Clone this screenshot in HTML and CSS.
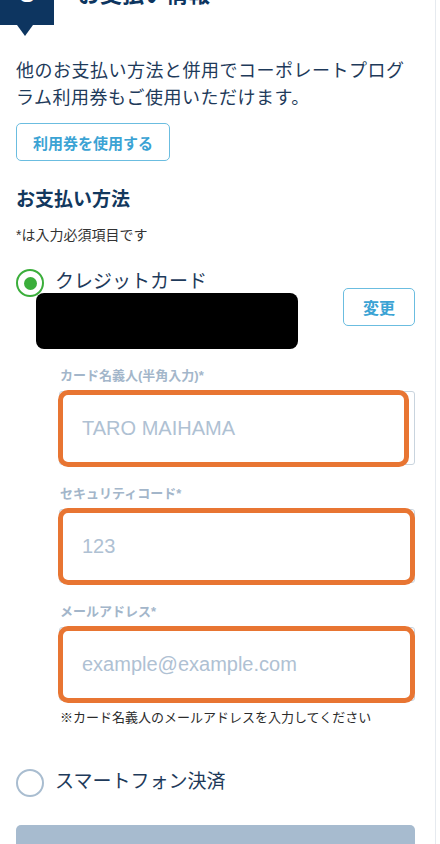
FILE: index.html
```html
<!DOCTYPE html>
<html lang="ja">
<head>
    <meta charset="UTF-8">
    <meta name="viewport" content="width=device-width, initial-scale=1.0">
    <title>お支払い情報</title>
    <link rel="stylesheet" href="styles.css">
</head>
<body>
    <div class="card">
        <div class="step-head">
            <div class="step-num">3</div>
            <h2 class="step-title">お支払い情報</h2>
        </div>

        <p class="lead">他のお支払い方法と併用でコーポレートプログラム利用券もご使用いただけます。</p>
        <button class="outline-button coupon-button">利用券を使用する</button>

        <h3 class="section-title">お支払い方法</h3>
        <p class="required-note">*は入力必須項目です</p>

        <div class="radio-row">
            <span class="radio checked"></span>
            <span class="radio-label">クレジットカード</span>
        </div>
        <div class="card-info">
            <div class="masked"></div>
            <button class="outline-button change-button">変更</button>
        </div>

        <div class="fields">
            <div class="field">
                <label class="field-label">カード名義人(半角入力)*</label>
                <div class="input-wrap hl-short">
                    <input class="text-input" type="text" placeholder="TARO MAIHAMA">
                </div>
            </div>
            <div class="field">
                <label class="field-label">セキュリティコード*</label>
                <div class="input-wrap">
                    <input class="text-input" type="text" placeholder="123">
                </div>
            </div>
            <div class="field">
                <label class="field-label">メールアドレス*</label>
                <div class="input-wrap">
                    <input class="text-input" type="email" placeholder="example@example.com">
                </div>
            </div>
            <p class="field-note">※カード名義人のメールアドレスを入力してください</p>
        </div>

        <div class="radio-row other-method">
            <span class="radio"></span>
            <span class="radio-label">スマートフォン決済</span>
        </div>

        <button class="submit-button">次へ</button>
    </div>
</body>
</html>
```

FILE: styles.css
```css
* {
    box-sizing: border-box;
}
body {
    margin: 0;
    background: #fff;
    font-family: 'Liberation Sans', 'Noto Sans CJK JP', sans-serif;
    color: #1e3a5a;
    overflow: hidden;
}
.card {
    width: 436px;
    min-height: 900px;
    border-right: 1px solid #e6eaef;
    padding: 0 20px 0 16px;
}
.step-head {
    display: flex;
    align-items: flex-end;
    gap: 24px;
    margin: -30px 0 0 -16px;
}
.step-num {
    position: relative;
    width: 54px;
    height: 55px;
    background: #0d3560;
    color: #fff;
    font-size: 30px;
    font-weight: bold;
    text-align: center;
    line-height: 44px;
}
.step-num::after {
    content: "";
    position: absolute;
    left: 17px;
    bottom: -11px;
    border-left: 8px solid transparent;
    border-right: 8px solid transparent;
    border-top: 11px solid #0d3560;
}
.step-title {
    margin: 0 0 18px;
    font-size: 22px;
    line-height: 24px;
    color: #0d3560;
}
.lead {
    margin: 33px 0 0;
    font-size: 18px;
    letter-spacing: 0.5px;
    line-height: 27px;
}
.outline-button {
    background: #fff;
    border: 1.5px solid #6bbde0;
    border-radius: 5px;
    color: #3ba3d4;
    font-family: inherit;
    font-weight: bold;
    cursor: pointer;
}
.coupon-button {
    display: block;
    margin-top: 11px;
    width: 154px;
    height: 38px;
    font-size: 15px;
    padding: 0;
}
.section-title {
    margin: 26px 0 0;
    font-size: 19px;
    line-height: 26px;
    color: #12385e;
}
.required-note {
    margin: 12px 0 0;
    font-size: 14px;
    line-height: 20px;
    color: #333;
}
.radio-row {
    display: flex;
    align-items: center;
    gap: 11px;
    height: 28px;
    margin-top: 24px;
}
.radio {
    width: 28px;
    height: 28px;
    border-radius: 50%;
    border: 2.5px solid #a9bdd0;
    display: flex;
    align-items: center;
    justify-content: center;
}
.radio.checked {
    border-color: #3bae3b;
}
.radio.checked::after {
    content: "";
    width: 13px;
    height: 13px;
    border-radius: 50%;
    background: #3bae3b;
}
.radio-label {
    font-size: 19px;
    line-height: 24px;
    margin-top: -3px;
}
.card-info {
    display: flex;
    justify-content: space-between;
    align-items: flex-start;
    margin-top: -9px;
    padding-left: 20px;
}
.masked {
    margin-top: 5px;
    width: 262px;
    height: 56px;
    background: #000;
    border-radius: 8px;
}
.change-button {
    width: 72px;
    height: 38px;
    font-size: 16px;
    padding: 0;
}
.fields {
    padding-left: 43px;
}
.field {
    margin-top: 20px;
}
.field:first-child {
    margin-top: 18px;
}
.field-label {
    display: block;
    padding-left: 1px;
    font-size: 13px;
    line-height: 18px;
    font-weight: bold;
    color: #a3b6ca;
}
.input-wrap {
    position: relative;
    margin-top: 6px;
}
.input-wrap::after {
    content: "";
    position: absolute;
    top: -1px;
    left: -1px;
    right: 0;
    bottom: -2px;
    border: 5px solid #e87532;
    border-radius: 10px;
    pointer-events: none;
}
.input-wrap.hl-short::after {
    right: 6px;
}
.text-input {
    display: block;
    width: 100%;
    height: 74px;
    border: 1px solid #c9d4de;
    border-radius: 3px;
    padding: 0 22px;
    font-family: 'Liberation Sans', sans-serif;
    font-size: 20px;
    color: #1e3a5a;
    background: #fff;
    outline: none;
}
.text-input::placeholder {
    color: #afc1d3;
}
.field-note {
    margin: 8px 0 0;
    padding-left: 1px;
    font-size: 13px;
    line-height: 18px;
    color: #2b2b2b;
}
.other-method {
    margin-top: 42px;
}
.submit-button {
    display: block;
    width: 100%;
    height: 56px;
    margin-top: 28px;
    border: none;
    border-radius: 5px;
    background: #a7bbcf;
    color: #fff;
    font-family: inherit;
    font-size: 17px;
    font-weight: bold;
}
```
